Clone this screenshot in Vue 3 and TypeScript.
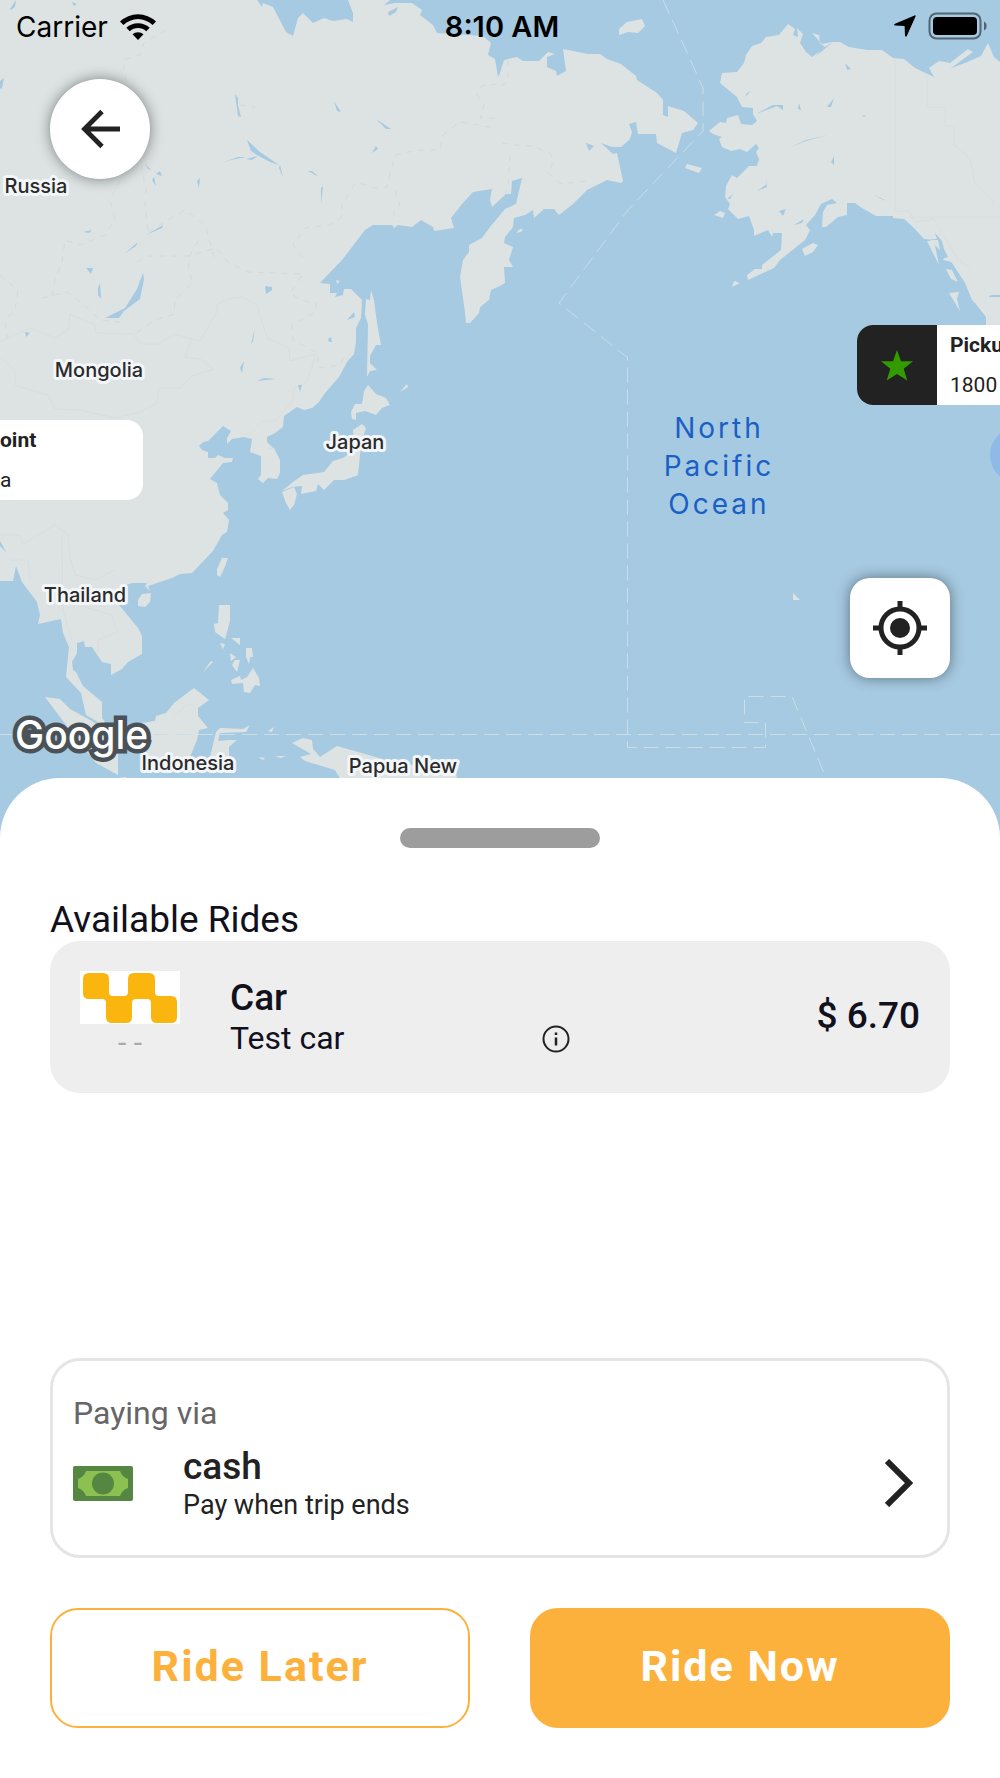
<script setup lang="ts">
interface MapLabel {
  name: string
  x: number
  y: number
}

const labels: MapLabel[] = [
  { name: 'Russia', x: 36, y: 193 },
  { name: 'Mongolia', x: 99, y: 377 },
  { name: 'Japan', x: 355, y: 449 },
  { name: 'Thailand', x: 85, y: 602 },
  { name: 'Indonesia', x: 188, y: 770 },
  { name: 'Papua New', x: 403, y: 773 },
]

const asia =
  'M0 0H257L262 7 263 3 273 7 286 32 293 36 298 18 303 13 313 23 324 18 333 21 347 19 353 22 353 13 348 0H390L384 5 395 3 412 3 422 10 420 15 433 25 437 33 483 36 491 43 488 55 495 59 498 77 500 73 504 60 517 57 523 61 539 61 548 52 555 54 547 57 547 67 556 71 557 76 566 71 563 49 588 54 600 54 607 59 621 64 636 76 637 80 657 93 663 100 663 115 668 117 668 106 684 111 698 123 693 130 682 133 676 153 657 143 656 134 638 134 636 122 629 124 632 132 630 139 621 147 612 147 601 143 613 154 617 153 623 181 621 183 607 180 587 190 573 204 559 215 554 209 544 209 534 218 533 210 525 215 514 218 513 227 505 237 504 243 513 247 509 260 513 267 504 267 505 283 500 286 491 290 489 300 480 307 479 313 470 323 466 323 465 312 460 277 463 260 469 252 469 245 482 238 490 227 500 215 505 209 516 204 522 178 512 181 511 194 506 194 492 207 490 200 492 189 473 192 462 204 451 218 454 228 434 231 433 227 421 220 412 227 398 225 394 228 392 225 373 225 365 230 342 260 320 283 330 284 330 293 337 293 335 297 343 295 344 289 351 289 362 300 361 318 356 328 356 342 354 354 347 362 339 377 325 393 319 402 312 408 304 410 297 407 284 416 283 427 275 433 267 437 267 442 275 450 280 460 280 473 277 479 268 478 263 483 258 479 261 475 261 456 250 452 252 439 244 437 232 439 227 444 227 438 231 431 223 426 217 432 208 441 203 442 199 446 202 450 208 452 208 458 215 458 218 455 225 458 233 458 232 462 223 463 210 479 217 483 220 495 228 503 228 510 223 513 229 520 227 532 222 535 213 551 192 573 180 574 172 578 148 586 150 591 145 586 147 583 133 583 125 585 115 600 138 628 142 636 142 654 128 662 122 669 111 675 111 664 102 662 92 647 85 647 84 641 77 643 77 653 72 662 73 670 76 672 83 686 102 702 102 718 105 722 103 725 86 715 81 693 66 677 69 647 63 633 61 619 38 624 40 615 37 602 22 582 16 566 13 581 0 581Z'

const america =
  'M788 24L795 29 793 35 798 37 797 28 803 34 800 43 806 52 812 57 820 51 816 56 833 42 825 47 820 43 819 35 812 33 822 44 832 42 840 42 849 47 867 50 882 50 893 58 904 59 915 68 934 77 929 68 939 61 950 63 968 49 973 52 951 68 965 63 981 56 988 43 994 57 1000 62V340H986L986 317 975 303 972 300 965 283 952 263 940 250 930 240 924 239 914 228 904 219 893 218 893 216 876 216 862 208 855 203 847 203 847 215 838 217 826 227 822 227 823 212 827 205 837 203 832 199 821 204 815 215 806 225 810 230 805 240 780 260 774 268 748 280 747 275 755 269 762 269 762 265 781 250 782 233 773 233 772 237 768 230 754 236 754 230 749 216 738 219 728 209 730 204 725 197 726 186 732 175 737 178 749 166 757 166 759 159 756 152 759 148 756 144 747 152 740 149 731 151 722 147 719 139 722 137 713 134 709 131 720 122 726 123 727 118 738 115 741 124 752 125 757 121 753 114 753 108 742 107 737 97 720 83 722 73 737 72 744 63 746 55 752 46 761 43 766 37 779 35Z'

const islands =
  'M619 29L627 22 642 19 645 26 638 33 628 32 619 35ZM685 168L687 164 702 168 699 173ZM714 215L720 211 725 213 723 218ZM802 249L813 243 818 245 813 252 805 256ZM732 287L734 281 740 283ZM927 241L934 241 939 265ZM940 243L947 245 949 256 952 262 943 260 945 256ZM946 269L952 270 958 282 951 279ZM949 293L959 292 957 299 960 311ZM516 233L520 229 523 229 521 232ZM366 299L370 300 371 290 374 300 377 323 381 345 376 345 370 356 370 363 377 370 370 371 367 377 368 324 365 315ZM336 280L340 281 337 284ZM400 392L407 384 408 387ZM368 385L376 394 386 398 390 405 382 408 376 415 365 411 356 413 356 420 352 419 351 412 355 404 362 404 364 391ZM362 424L366 428 362 440 360 455 358 475 353 477 344 480 334 480 324 490 318 484 316 491 301 494 302 486 292 487 282 491 293 482 303 475 324 472 333 461 343 458 354 450 353 430ZM282 492L294 487 297 494 294 505 290 510 286 503ZM217 569L222 558 228 558 224 569 220 577 217 575ZM138 600L142 594 151 593 150 602 145 607 138 606ZM219 605L230 605 230 621 225 639 215 632 214 624 218 623ZM220 643L225 644 223 649ZM231 638L240 638 240 645ZM203 672L211 661 213 662ZM230 653L236 657 231 661ZM246 648L252 648 253 657 250 657 249 664 246 657ZM232 665L235 660 240 660 237 672ZM231 680L240 676 241 680 247 677 253 668 259 678 260 686 255 685 250 693 244 692 243 683 232 684ZM45 697L60 699 70 709 92 721 112 738 118 755 118 775 96 763 78 741ZM142 723L155 721 156 716 166 713 174 703 194 688 209 700 198 708 198 716 208 728 199 730 197 740 190 757 150 760 142 742ZM210 757L216 732 220 728 243 729 250 725 246 732 220 733 218 741 228 740 237 740 229 747 229 756ZM268 731L274 727 272 732ZM258 757L265 758 263 760ZM275 756L286 756 281 758ZM292 743L303 738 312 740 313 749 320 757 337 746 386 760 430 768 456 774 458 780H341L335 770 305 761 300 757 311 754ZM118 778L126 777V779H118ZM793 593L800 600H793Z'

const lakes =
  'M10 9L16 0 15 7 11 10ZM72 2L77 4 74 6ZM0 81L4 78 2 89 0 88ZM388 12L398 7 396 12 389 16ZM235 94L238 98 238 105 241 117 238 116ZM334 101L341 112 337 111ZM340 114L350 127ZM376 119L391 129 386 129ZM372 153L376 146 378 149ZM247 140L260 152 279 165 270 162 257 155 251 151ZM221 163L238 157 246 157 231 160ZM246 159L258 156 252 160ZM280 165L283 178 279 168ZM308 171L312 171 319 177ZM321 188L323 186 321 204ZM145 164L151 170 148 169ZM156 174L160 171 162 176ZM152 180L154 177 156 186ZM197 181L200 178 199 188ZM83 232L92 230 89 233ZM146 235L163 225 162 228ZM124 254L138 242 136 246ZM86 268L93 268 91 274ZM98 288L100 283 101 299 98 295ZM105 318L125 308 137 289 143 273 144 279 140 299 124 311 119 318ZM25 332L30 333 26 337ZM265 286L272 287 272 290 266 294ZM347 320L354 312 355 317ZM328 339L331 337 332 342 329 342ZM251 344L255 327 253 341ZM240 368L244 361 242 373ZM257 381L264 378 276 379ZM298 385L302 385 300 392ZM0 541L6 552 0 546ZM586 143L594 146 589 151ZM745 97L747 93 751 91ZM756 114L773 105 783 105 783 110 777 106ZM798 109L799 103 801 110ZM827 107L834 98 831 107ZM862 116L864 115 866 117ZM831 162L834 156 834 165ZM845 63L851 69 847 70ZM727 199L733 194 730 199ZM757 191L767 184 766 176 767 187ZM779 211L786 209 783 216ZM794 225L804 219 802 223ZM874 195L887 201 881 199ZM935 233L942 241 944 249 948 257 942 259 938 240 924 240 937 239ZM806 39L812 38 812 40ZM989 296L992 295H1000V297H989ZM791 147L806 140 828 135 806 141Z'

const provinces =
  'M166 30L144 43 140 55 123 60 126 82M141 165L146 190 145 205 148 232M120 180L110 200 115 220 105 235 80 245 65 240 62 262 55 280 52 298M148 232L165 222 185 210 205 225 215 260M198 241L190 255 188 270 193 282 175 300 174 314 155 320 134 335M0 275L18 290 15 310 5 320 7 338M137 262L148 256 188 256 216 248 228 262 248 272 303 274 290 293 300 300 316 303 316 312 292 325 293 340 318 353 318 368 340 365 345 355M303 258L293 245 305 228 330 225 341 218 342 205 356 182 375 188 387 187 395 155 418 150 440 150 443 135 460 122 495 128M495 118L480 118 484 105 477 95 482 86 498 84M395 190L400 205 393 213 400 222M508 60L508 82 500 86M502 143L515 145 532 146 550 153 554 160 548 173 561 184 588 181M510 155L508 188 505 193M42 298L67 292 82 303 100 320 120 322M240 105L255 107'

const borders =
  'M0 342L30 328 55 338 68 330 70 314 95 325 96 333 133 334 141 344 158 344 175 334 192 339 200 341 218 310 216 305 228 299 243 297 257 305 267 338 289 348 290 361 316 354 307 382 294 388 292 402 275 421 262 421 250 435M192 339L185 357 200 359 214 369 192 376 180 388 159 388 157 403 140 412 115 418 80 410 55 409 48 395 15 385 15 370 0 357M0 535L20 535 23 544 55 525 68 535 70 558 75 575 95 580 115 570M10 560L28 560 30 580M62 535L63 610 72 640M85 607L112 615 117 632 98 640 98 652M174 716L185 706 188 704 197 704M895 58V211H909L915 222 934 219 958 260 970 267M927 76V107H945V126H954V145L970 158 975 184 993 200V206M909 217H1000M268 448L275 449'
</script>

<template>
  <main class="screen">
    <section class="map" aria-label="Map">
      <svg class="map-art" viewBox="0 0 1000 838" preserveAspectRatio="xMidYMin slice" aria-hidden="true">
        <g class="land">
          <path :d="asia" />
          <path :d="america" />
          <path :d="islands" />
        </g>
        <path class="provinces" :d="provinces" />
        <path class="borders" :d="borders" />
        <path class="water" :d="lakes" />
        <g class="dateline">
          <path d="M0 734.500H1000" />
          <path d="M663 0L680 37 703 88V131L628 210 559 303 627.500 357.500V747.500H765.500V722.500H744.500V696.500H792L826 778" />
        </g>
        <circle class="accuracy" cx="1018" cy="455" r="28" />
        <g class="labels">
          <text v-for="label in labels" :key="label.name" :x="label.x" :y="label.y">{{ label.name }}</text>
        </g>
        <g class="ocean">
          <text x="719" y="438">North</text>
          <text x="719" y="476">Pacific</text>
          <text x="719" y="514">Ocean</text>
        </g>
        <text class="brand" x="15" y="749">Google</text>
      </svg>

      <div class="callout drop">
        <div class="callout-text">
          <strong>oint</strong>
          <span>a</span>
        </div>
      </div>
      <div class="callout pickup">
        <div class="callout-icon">
          <svg viewBox="0 0 32 31" width="32" height="31" aria-hidden="true">
            <path d="M16 0L20 11.300H32L22.700 18.800 26.300 30.500 16 24 5.700 30.500 9.300 18.800 0 11.300H12Z" fill="#339b00" />
          </svg>
        </div>
        <div class="callout-text">
          <strong>Picku</strong>
          <span>1800</span>
        </div>
      </div>

      <header class="status">
        <div class="status-left">
          <span>Carrier</span>
          <svg viewBox="0 0 36 27" width="36" height="27" aria-hidden="true">
            <path d="M0 8.500A26 26 0 0 1 36 8.500L32.600 12A21 21 0 0 0 3.400 12Z" />
            <path d="M6.300 14.800A17 17 0 0 1 29.700 14.800L26.200 18.300A12 12 0 0 0 9.800 18.300Z" />
            <path d="M12.500 21.300A8.500 8.500 0 0 1 23.500 21.300L18 27Z" />
          </svg>
        </div>
        <time>8:10 AM</time>
        <div class="status-right">
          <svg viewBox="0 0 22 22" width="22" height="22" aria-hidden="true">
            <path d="M21.500 1.500C22 .5 21.400 0 20.500.4L1 8.800C-.4 9.500 0 10.500 1.200 10.600L10.600 11 11 20.600C11.100 22 12.200 22 12.800 20.900Z" />
          </svg>
          <svg viewBox="0 0 60 28" width="60" height="28" aria-hidden="true">
            <rect x="1.500" y="1.500" width="51" height="25" rx="7" fill="none" stroke="#000" stroke-opacity=".5" stroke-width="2" />
            <rect x="5" y="5" width="44" height="18" rx="4" />
            <path d="M56 9.500C59.500 11 59.500 17 56 18.500Z" fill-opacity=".5" />
          </svg>
        </div>
      </header>

      <button class="fab back" type="button" aria-label="Back">
        <svg viewBox="0 0 40 40" width="40" height="40" aria-hidden="true">
          <path d="M40 20H5M22 2.500L4.500 20 22 37.500" fill="none" stroke="#222" stroke-width="4.800" />
        </svg>
      </button>
      <button class="fab locate" type="button" aria-label="My location">
        <svg viewBox="0 0 54 54" width="54" height="54" aria-hidden="true">
          <circle cx="27" cy="27" r="19" fill="none" stroke="#222" stroke-width="5" />
          <circle cx="27" cy="27" r="10" fill="#222" />
          <path d="M27 0V7M27 47V54M0 27H7M47 27H54" stroke="#222" stroke-width="5" />
        </svg>
      </button>
    </section>

    <section class="sheet">
      <div class="handle"></div>
      <h1>Available Rides</h1>

      <article class="ride">
        <div class="ride-picture">
          <svg viewBox="0 0 100 53" width="100" height="53" aria-hidden="true">
            <rect width="100" height="53" fill="#fff" />
            <path
              fill="#fab50f"
              d="M9 2H23Q29 2 29 8V21Q29 25 33 25H44Q48 25 48 21V8Q48 2 54 2H69Q75 2 75 8V21Q75 25 79 25H91Q97 25 97 31V46Q97 52 91 52H77Q71 52 71 46V32Q71 28 67 28H56Q52 28 52 32V46Q52 52 46 52H32Q26 52 26 46V32Q26 28 22 28H9Q3 28 3 22V8Q3 2 9 2Z"
            />
          </svg>
          <span>- -</span>
        </div>
        <div class="ride-text">
          <h2>Car</h2>
          <p>Test car</p>
        </div>
        <button class="info" type="button" aria-label="Ride details">
          <svg viewBox="0 0 28 28" width="28" height="28" aria-hidden="true">
            <circle cx="14" cy="14" r="12.500" fill="none" stroke="#222" stroke-width="2" />
            <path d="M14 7.500V10M14 12.500V20.500" stroke="#222" stroke-width="2.500" />
          </svg>
        </button>
        <strong class="price">$ 6.70</strong>
      </article>

      <button class="payment" type="button">
        <span class="payment-title">Paying via</span>
        <span class="payment-row">
          <svg viewBox="0 0 60 35" width="60" height="35" aria-hidden="true">
            <rect width="60" height="35" rx="2" fill="#558742" />
            <path d="M13 5H47Q49 11 55 13V22Q49 24 47 30H13Q11 24 5 22V13Q11 11 13 5Z" fill="#8cc152" />
            <circle cx="30" cy="17.500" r="11" fill="#558742" />
          </svg>
          <span class="payment-text">
            <strong>cash</strong>
            <span>Pay when trip ends</span>
          </span>
          <svg viewBox="0 0 28 48" width="28" height="48" aria-hidden="true">
            <path d="M2 2L24 24 2 46" fill="none" stroke="#222" stroke-width="6" />
          </svg>
        </span>
      </button>

      <footer class="actions">
        <button class="later" type="button">Ride Later</button>
        <button class="now" type="button">Ride Now</button>
      </footer>
    </section>
  </main>
</template>

<style>
body {
  margin: 0;
}
</style>

<style scoped>
.screen {
  display: flex;
  flex-direction: column;
  min-height: 100vh;
  overflow: hidden;
  background: #fff;
  color: #222;
  font-family: Roboto, 'Liberation Sans', sans-serif;
}
button {
  margin: 0;
  padding: 0;
  border: 0;
  background: none;
  color: inherit;
  font: inherit;
  cursor: pointer;
}
svg {
  display: block;
  flex: none;
}
h1,
h2,
p {
  margin: 0;
}

.map {
  position: relative;
  display: flex;
  flex-direction: column;
  min-height: 838px;
  background: #a6cae2;
}
.map-art {
  position: absolute;
  inset: 0;
  width: 100%;
  height: 100%;
}
.land {
  fill: #dde3e3;
}
.water {
  fill: #a6cae2;
}
.provinces,
.borders {
  fill: none;
  stroke: #d4dada;
}
.provinces {
  stroke-dasharray: 6 6;
}
.borders {
  stroke: #d8dede;
}
.dateline {
  fill: none;
  stroke: #cbdde5;
  stroke-dasharray: 15 7;
}
.accuracy {
  fill: #8fbae7;
}
.labels {
  fill: #2a2a2a;
  stroke: #f3f6f8;
  stroke-width: 6px;
  stroke-linejoin: round;
  paint-order: stroke;
  font: 500 20px Inter, sans-serif;
  text-anchor: middle;
}
.ocean {
  fill: #1a5fc4;
  font: 400 28px Inter, sans-serif;
  letter-spacing: 3px;
  text-anchor: middle;
}
.brand {
  fill: #fff;
  stroke: #4a5258;
  stroke-width: 9px;
  paint-order: stroke;
  font: 500 39px Inter, sans-serif;
}

.callout {
  position: absolute;
  display: flex;
  height: 80px;
  background: #fff;
  overflow: hidden;
}
.drop {
  top: 420px;
  left: 0;
  width: 143px;
  border-radius: 0 16px 16px 0;
}
.pickup {
  top: 325px;
  right: 0;
  width: 143px;
  border-radius: 16px 0 0 16px;
}
.callout-icon {
  display: flex;
  flex: none;
  align-items: center;
  justify-content: center;
  width: 80px;
  background: #222;
}
.callout-text {
  display: flex;
  flex-direction: column;
  font-size: 21px;
  line-height: 40px;
}
.callout-text strong {
  font-weight: 700;
}
.pickup .callout-text {
  padding-left: 13px;
}

.status {
  position: relative;
  display: grid;
  grid-template-columns: 1fr auto 1fr;
  align-items: center;
  height: 50px;
  padding: 0 12px 0 16px;
  color: #000;
  font: 400 28px/50px Inter, sans-serif;
}
.status time,
.status-left span {
  padding-top: 2px;
}
.status time {
  font-weight: 600;
  font-size: 29px;
}
.status-left,
.status-right {
  display: flex;
  align-items: center;
  gap: 12px;
}
.status-right {
  justify-content: flex-end;
}

.fab {
  position: relative;
  display: flex;
  align-items: center;
  justify-content: center;
  width: 100px;
  height: 100px;
  background: #fff;
  box-shadow: 0 0 14px rgba(0, 0, 0, 0.45);
}
.back {
  margin: 29px 0 0 50px;
  border-radius: 50%;
}
.locate {
  margin: auto 50px 160px auto;
  border-radius: 20px;
}

.sheet {
  position: relative;
  display: flex;
  flex: 1;
  flex-direction: column;
  margin-top: -60px;
  padding: 50px;
  border-radius: 60px 60px 0 0;
  background: #fff;
}
.handle {
  align-self: center;
  width: 200px;
  height: 20px;
  border-radius: 10px;
  background: #9d9d9d;
}
h1 {
  margin-top: 50px;
  color: #11111d;
  font-size: 37px;
  font-weight: 400;
  line-height: 43px;
}
.ride {
  display: flex;
  align-items: center;
  min-height: 152px;
  padding: 0 30px 2px;
  border-radius: 30px;
  background: #eee;
  color: #11111d;
  box-sizing: border-box;
}
.ride-picture {
  display: flex;
  flex-direction: column;
  align-items: center;
  color: #aaa;
  font-size: 30px;
  line-height: 38px;
}
.ride-text {
  flex: 8;
  margin-left: 50px;
}
h2 {
  font-size: 37px;
  font-weight: 500;
  line-height: 44px;
}
.ride-text p {
  font-size: 32px;
  line-height: 36px;
}
.info {
  margin-top: 46px;
}
.price {
  flex: 9;
  font-size: 37px;
  font-weight: 500;
  line-height: 44px;
  text-align: right;
}
.payment {
  display: flex;
  flex-direction: column;
  gap: 12px;
  margin-top: auto;
  padding: 32px 34px 34px 20px;
  border: 3px solid #e5e5e5;
  border-radius: 30px;
  text-align: left;
}
.payment-title {
  color: #666;
  font-size: 32px;
  line-height: 40px;
}
.payment-row {
  display: flex;
  align-items: center;
}
.payment-text {
  display: flex;
  flex: 1;
  flex-direction: column;
  margin-left: 50px;
}
.payment-text strong {
  font-size: 37px;
  font-weight: 500;
  line-height: 44px;
}
.payment-text span {
  font-size: 27px;
  line-height: 32px;
}
.actions {
  display: grid;
  grid-template-columns: 1fr 1fr;
  gap: 60px;
  margin-top: 50px;
}
.actions button {
  height: 120px;
  padding-bottom: 4px;
  border: 2px solid #fdb13d;
  border-radius: 28px;
  font-size: 43px;
  font-weight: 700;
  letter-spacing: 2px;
}
.later {
  color: #fdb13d;
}
.now {
  background: #fdb13d;
  color: #fff;
}
</style>
